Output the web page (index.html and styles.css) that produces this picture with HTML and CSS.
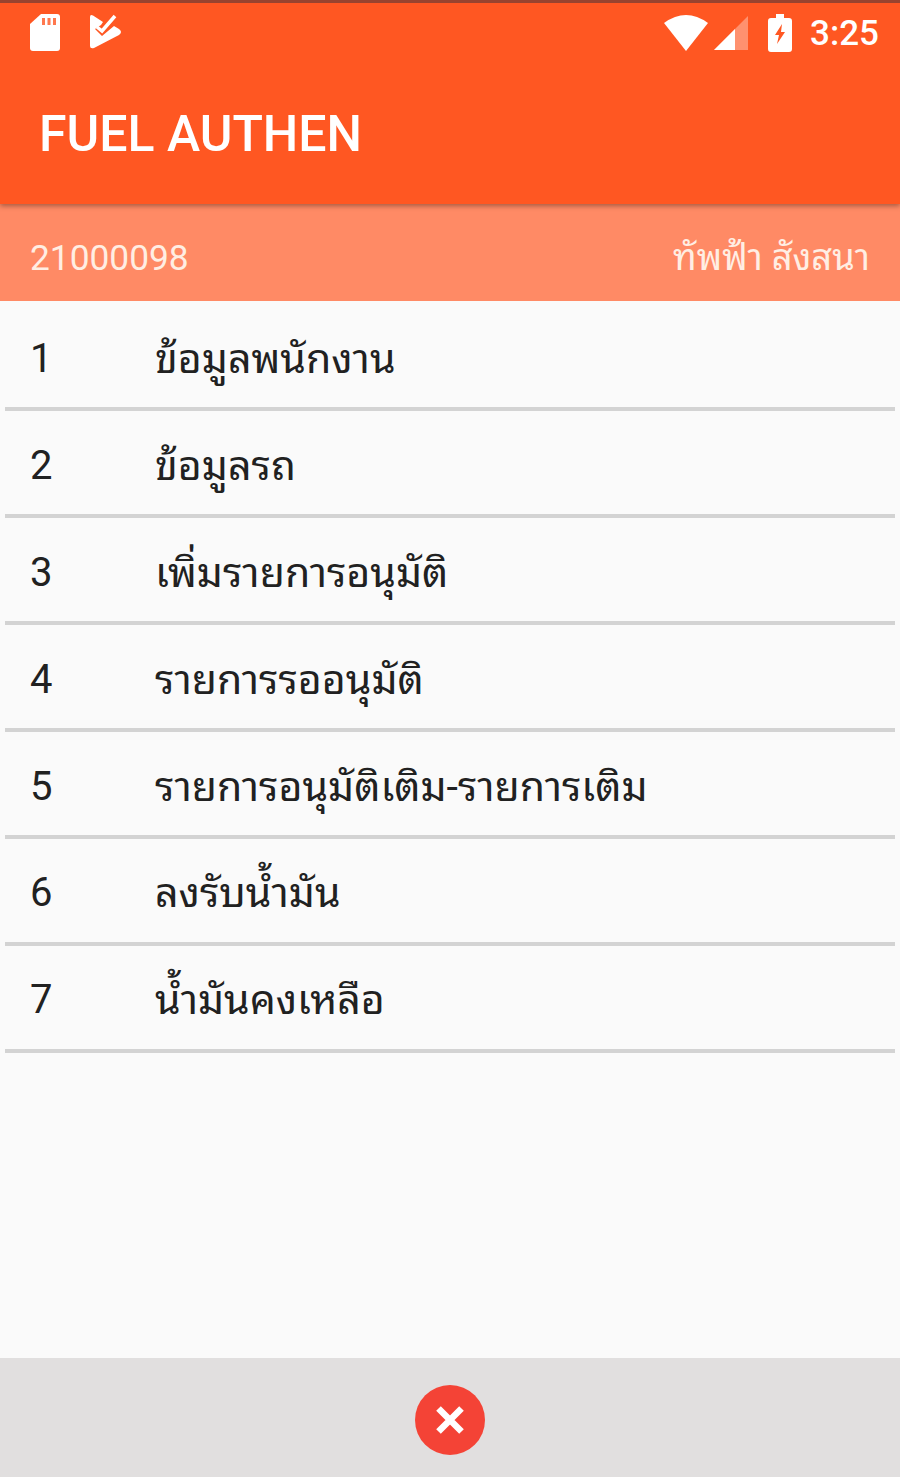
FILE: index.html
```html
<!DOCTYPE html>
<html lang="th">
<head>
<meta charset="utf-8">
<title>FUEL AUTHEN</title>
<link rel="stylesheet" href="styles.css">
</head>
<body>
<div class="screen">
  <header class="top">
    <div class="status">
      <svg class="sd" viewBox="0 0 30 37" width="30" height="37"><path fill="#fff" d="M11 0H27Q30 0 30 3V34Q30 37 27 37H3Q0 37 0 34V10Z"/><path stroke="#ff5722" stroke-width="3" opacity=".8" d="M13.5 4V11M19 4V11M24.5 4V11"/></svg>
      <svg class="play" viewBox="0 0 32 36" width="32" height="36"><path fill="#fff" d="M0 3Q0 0 3 1.500L13 8L11 11L5 15L12 22L24 12L29 15Q33 18 29 21L4 34Q0 35 0 32Z"/><path fill="none" stroke="#fff" stroke-width="3.5" d="M7 13L12 17L25 2"/></svg>
      <svg class="wifi" viewBox="0 0 44 36" width="44" height="36"><path fill="#fff" d="M0 8Q22 -8 44 8L22 36Z"/></svg>
      <svg class="signal" viewBox="0 0 34 34" width="34" height="34"><path fill="#fff" opacity=".35" d="M34 0V34H0Z"/><path fill="#fff" d="M21 13V34H0Z"/></svg>
      <svg class="battery" viewBox="0 0 24 38" width="24" height="38"><path fill="#fff" fill-rule="evenodd" d="M8 0H16V4H21Q24 4 24 7V35Q24 38 21 38H3Q0 38 0 35V7Q0 4 3 4H8ZM14 10L7 21H11L9 30L17 18H13Z"/></svg>
      <span class="clock">3:25</span>
    </div>
    <h1 class="title">FUEL AUTHEN</h1>
  </header>
  <div class="user"><span>21000098</span><span class="name">ทัพฟ้า สังสนา</span></div>
  <ul class="list">
    <li><span class="num">1</span><span class="label">ข้อมูลพนักงาน</span></li>
    <li><span class="num">2</span><span class="label">ข้อมูลรถ</span></li>
    <li><span class="num">3</span><span class="label">เพิ่มรายการอนุมัติ</span></li>
    <li><span class="num">4</span><span class="label">รายการรออนุมัติ</span></li>
    <li><span class="num">5</span><span class="label">รายการอนุมัติเติม-รายการเติม</span></li>
    <li><span class="num">6</span><span class="label">ลงรับน้ำมัน</span></li>
    <li><span class="num">7</span><span class="label">น้ำมันคงเหลือ</span></li>
  </ul>
  <footer class="bottom">
    <svg viewBox="0 0 70 70" width="70" height="70"><circle cx="35" cy="35" r="35" fill="#f44336"/><path d="M23.500 23.500L46.500 46.500M46.500 23.500L23.500 46.500" stroke="#fff" stroke-width="6.500"/></svg>
  </footer>
</div>
</body>
</html>
```
FILE: styles.css
```css
* { box-sizing: border-box; }
body { margin: 0; font-family: Roboto, "Noto Sans Thai Looped", "Noto Looped Thai", Loma, Garuda, Waree, "Noto Sans", sans-serif; }
.screen { width: 900px; height: 1477px; display: flex; flex-direction: column; background: #fafafa; color: #212121; }
.top { height: 204px; background: #ff5722; border-top: 3px solid #98432f; color: #fff; box-shadow: 0 2px 5px rgba(0,0,0,.35); z-index: 1; }
.status { height: 60px; padding: 0 21px 0 30px; display: flex; align-items: center; }
.sd, .play { margin-bottom: 2px; }
.play { margin-left: 30px; }
.wifi { margin-left: auto; }
.signal { margin-left: 6px; }
.battery { margin-left: 20px; }
.clock { margin-left: 18px; font-size: 35px; font-weight: 500; }
.title { margin: 0; padding-left: 39px; font-size: 50px; line-height: 142px; font-weight: 500; }
.user { height: 97px; padding: 10px 30px 0; display: flex; align-items: center; justify-content: space-between; background: #ff8a65; color: #ffeee3; font-size: 35.3px; }
.name { margin-bottom: 8px; font-size: 36.2px; }
.list { flex: 1; margin: 0; padding: 3.6px 5px; list-style: none; }
.list li { height: 106.9px; padding: 5px 0 0 25px; display: flex; align-items: center; border-bottom: 4px solid #d3d3d3; font-size: 40px; }
.num { width: 125px; }
.label { margin-bottom: 8px; white-space: nowrap; font-size: 41.1px; }
.bottom { height: 119px; padding-top: 4px; display: flex; align-items: center; justify-content: center; background: #e1dfdf; }
```
